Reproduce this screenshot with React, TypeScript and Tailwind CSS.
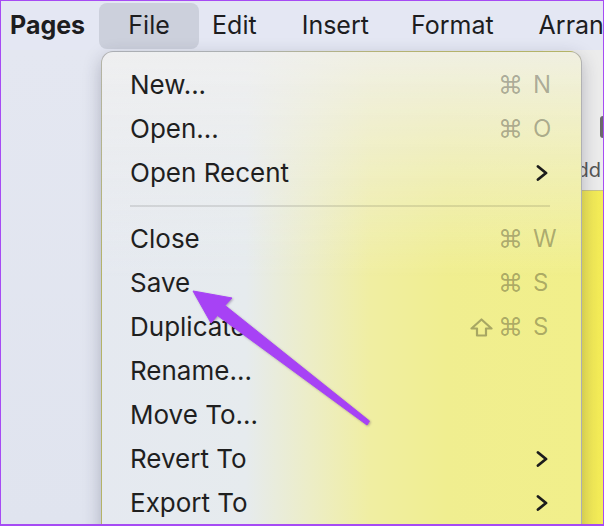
import { ReactNode } from "react";

type Item = {
  label: string;
  keys?: string;
  shift?: boolean;
  sub?: boolean;
};

const topItems: Item[] = [
  { label: "New...", keys: "N" },
  { label: "Open...", keys: "O" },
  { label: "Open Recent", sub: true },
];

const bottomItems: Item[] = [
  { label: "Close", keys: "W" },
  { label: "Save", keys: "S" },
  { label: "Duplicate", keys: "S", shift: true },
  { label: "Rename..." },
  { label: "Move To..." },
  { label: "Revert To", sub: true },
  { label: "Export To", sub: true },
];

function Chevron() {
  return (
    <svg width="12" height="16" viewBox="0 0 12 16" className="mr-[2px]">
      <polyline
        points="2,1.5 10,8 2,14.5"
        fill="none"
        stroke="#1c1c1c"
        strokeWidth="2.8"
        strokeLinecap="round"
        strokeLinejoin="round"
      />
    </svg>
  );
}

function ShiftIcon() {
  return (
    <svg width="23" height="19" viewBox="0 0 23 19" className="mr-[5px]">
      <path
        d="M11.5 1.5 L21.5 10.5 H16 V17.5 H7 V10.5 H1.5 Z"
        fill="none"
        stroke="currentColor"
        strokeWidth="2.2"
        strokeLinejoin="round"
      />
    </svg>
  );
}

function Row({ item }: { item: Item }) {
  let right: ReactNode = null;
  if (item.sub) right = <Chevron />;
  else if (item.keys)
    right = (
      <span className="flex items-center text-[24px] text-black/30">
        {item.shift && <ShiftIcon />}
        <span className="mr-[10px] font-['DejaVu_Sans',sans-serif] text-[25px] leading-none">⌘</span>
        <span className="w-[17px] whitespace-nowrap text-left">{item.keys}</span>
      </span>
    );
  return (
    <div className="flex h-[44px] items-center justify-between">
      <span className="text-[26px] leading-[44px] text-[#1f1f1f]">{item.label}</span>
      {right}
    </div>
  );
}

export default function App() {
  return (
    <div className="relative flex h-[526px] w-[604px] flex-col overflow-hidden border border-b-2 border-[#a64bf4] bg-[#e1e5f0] font-['Inter',sans-serif]">
      {/* menu bar */}
      <div className="flex h-[49px] shrink-0 items-center bg-[#e4e7f3] text-[25px] text-[#1d1d1f]">
        <span className="shrink-0 pl-[9px] font-bold">Pages</span>
        <span className="ml-[14px] flex h-[46px] w-[100px] shrink-0 items-center justify-center rounded-[8px] bg-[#ccd0dc]">
          File
        </span>
        <span className="ml-[13px] shrink-0">Edit</span>
        <span className="ml-[45px] shrink-0">Insert</span>
        <span className="ml-[42px] shrink-0">Format</span>
        <span className="ml-[45px] shrink-0 whitespace-nowrap">Arrange</span>
      </div>

      {/* window content behind the menu */}
      <div className="flex flex-1">
        <div className="flex-1 bg-[linear-gradient(180deg,#e4e7f1,#e0e4ef)]" />
        <div className="flex w-[60px] flex-col">
          <div className="relative h-[140px] bg-[#ececec]">
            <div className="absolute right-0 top-[66px] h-[22px] w-[3px] rounded-l bg-[#6a6a6a]" />
            <span className="absolute right-[2px] top-[105px] text-[20px] text-[#555]">Add</span>
          </div>
          <div className="flex-1 border-t border-[#c9c48a] bg-[linear-gradient(90deg,#ece450,#f4ec58)]" />
        </div>
      </div>

      {/* File menu */}
      <div className="absolute left-[100px] top-[50px] h-[500px] w-[481px] rounded-t-[12px] border border-black/25 bg-[linear-gradient(180deg,rgba(240,240,240,0.85)_0%,rgba(240,240,240,0)_45%),linear-gradient(90deg,#e5e9f0_0%,#e6ebee_30%,#ecedc8_43%,#f0eea2_56%,#f0ee90_72%,#f1ef8a_100%)] pl-[28px] pr-[31px] pt-[11px] shadow-[0_6px_18px_rgba(40,40,70,0.28)]">
        {topItems.map((it) => (
          <Row key={it.label} item={it} />
        ))}
        <div className="flex h-[22px] items-center pr-[-3px]">
          <div className="h-[2px] w-full bg-black/10" />
        </div>
        {bottomItems.map((it) => (
          <Row key={it.label} item={it} />
        ))}
      </div>

      {/* annotation arrow */}
      <svg
        className="pointer-events-none absolute left-0 top-0"
        width="604"
        height="526"
        viewBox="0 0 604 526"
      >
        <polygon
          points="192,290 231,297 224,304.5 368.5,420 366,424 216.5,314.5 210,322"
          fill="#a742f5"
          stroke="#a742f5"
          strokeWidth="1"
          strokeLinejoin="round"
          style={{ filter: "drop-shadow(1px 1px 1px rgba(60,30,80,0.35))" }}
        />
      </svg>
    </div>
  );
}
